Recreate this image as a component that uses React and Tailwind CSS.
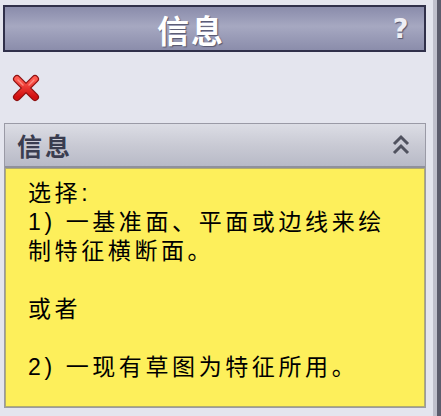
export default function App() {
  const cjk = { fontFamily: '"Noto Sans CJK SC", "Noto Sans", sans-serif' };
  const body = { fontFamily: '"Liberation Sans", "Noto Sans CJK SC", sans-serif' };
  return (
    <div className="w-[441px] h-[416px] bg-[#e4e5ee] flex overflow-hidden" style={cjk}>
      <div className="flex-1 flex flex-col pl-[3px]">
        {/* Title bar */}
        <div className="mt-[5px] w-[423px] h-[47px] flex border-2 border-[#30304a] bg-[linear-gradient(to_bottom,#8a8cab_0%,#a6a8c1_45%,#9c9eb9_65%,#8b8dab_100%)]">
          <div className="flex-1 flex items-center justify-center text-white font-bold text-[32px] leading-none tracking-[2px] [text-shadow:1px_1px_1px_#55566e]">
            信息
          </div>
          <div className="w-[47px] flex items-center justify-center text-[#eeeef4] font-bold text-[27px] leading-none [text-shadow:1px_1px_1px_#55566e]" style={{ fontFamily: '"DejaVu Sans", sans-serif' }}>
            ?
          </div>
        </div>
        {/* Red X row */}
        <div className="h-[71px] flex items-center pl-[9px]">
          <svg width="28" height="28" viewBox="0 0 28 28">
            <defs>
              <linearGradient id="xg" x1="0" y1="0" x2="0" y2="1">
                <stop offset="0" stopColor="#ff5a50" />
                <stop offset="1" stopColor="#d10f10" />
              </linearGradient>
            </defs>
            <path d="M5 5 L23 23 M23 5 L5 23" stroke="#8e1010" strokeWidth="8" strokeLinecap="round" />
            <path d="M5 5 L23 23 M23 5 L5 23" stroke="url(#xg)" strokeWidth="5.5" strokeLinecap="round" />
            <path d="M6 6 L11 11 M22 6 L17 11" stroke="#ff9a90" strokeWidth="1.5" strokeLinecap="round" opacity="0.8" />
          </svg>
        </div>
        {/* Section */}
        <div className="ml-[1px] w-[422px] flex flex-col border border-[#9a9aa6]">
          <div className="h-[44px] flex items-center justify-between pl-[12px] pr-[14px] border-b-2 border-[#8f909c] bg-[linear-gradient(to_bottom,#dcdde5_0%,#c9cad4_50%,#b8bac7_100%)]">
            <span className="text-[#3a3d50] font-bold text-[25px] leading-none tracking-[3px]">信息</span>
            <svg width="20" height="22" viewBox="0 0 20 22">
              <path d="M3 10 L10 3 L17 10 M3 19 L10 12 L17 19" fill="none" stroke="#50525f" strokeWidth="3" />
            </svg>
          </div>
          <div className="h-[239px] bg-[#fdef5b] border border-[#b0ac70] pl-[22px] pt-[10px] text-black text-[23px] leading-[29px] tracking-[3.6px] whitespace-nowrap" style={body}>
            <div>选择:</div>
            <div>1) 一基准面、平面或边线来绘</div>
            <div>制特征横断面。</div>
            <div>&nbsp;</div>
            <div>或者</div>
            <div>&nbsp;</div>
            <div>2) 一现有草图为特征所用。</div>
          </div>
        </div>
      </div>
      <div className="w-[4px] bg-[#c0c0cc]" />
      <div className="w-[4px] bg-[#5c5c6c]" />
    </div>
  );
}
